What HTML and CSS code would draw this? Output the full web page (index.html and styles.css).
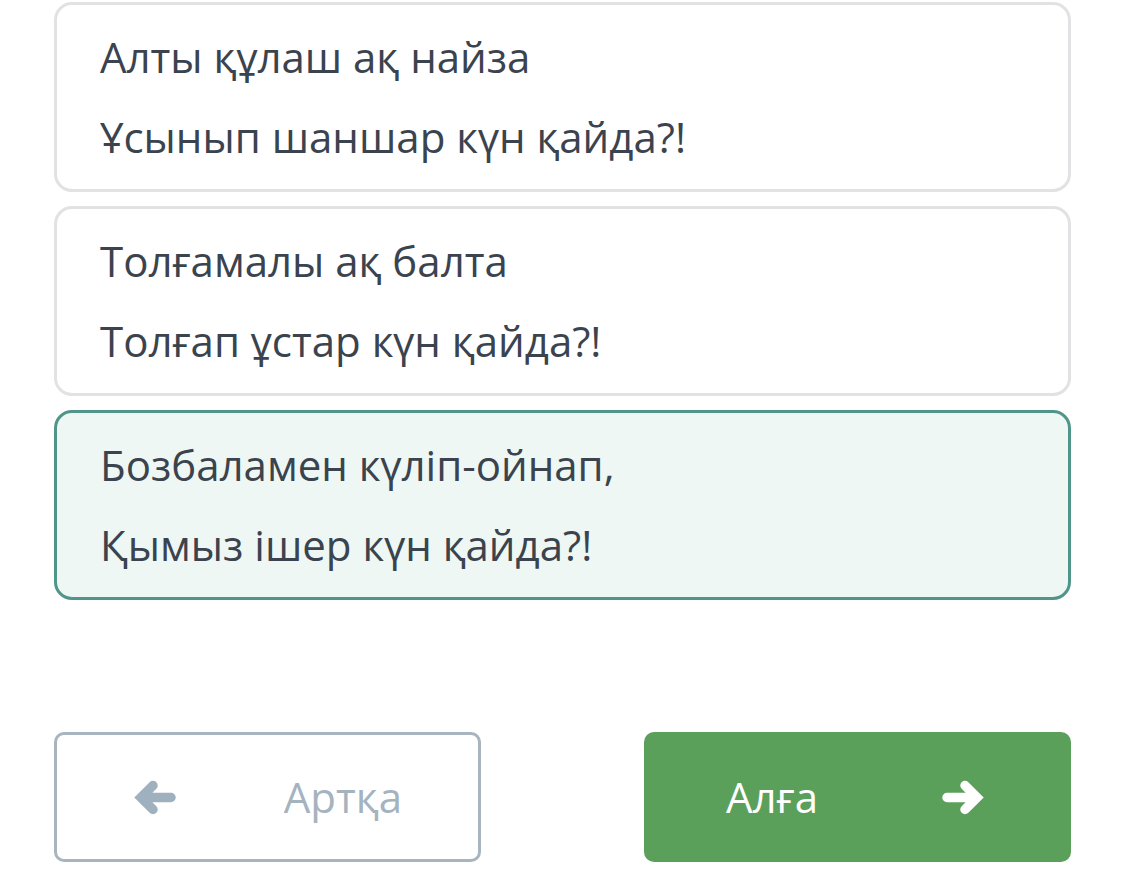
FILE: index.html
```html
<!DOCTYPE html>
<html lang="kk">
<head>
<meta charset="utf-8">
<title>Quiz</title>
<link rel="stylesheet" href="styles.css">
</head>
<body>
<main class="page">
  <section class="options">
    <div class="option">
      <p class="line">Алты құлаш ақ найза</p>
      <p class="line">Ұсынып шаншар күн қайда?!</p>
    </div>
    <div class="option">
      <p class="line">Толғамалы ақ балта</p>
      <p class="line">Толғап ұстар күн қайда?!</p>
    </div>
    <div class="option option-selected">
      <p class="line">Бозбаламен күліп-ойнап,</p>
      <p class="line">Қымыз ішер күн қайда?!</p>
    </div>
  </section>
  <nav class="nav">
    <button class="btn btn-back" type="button">
      <svg class="icon" viewBox="0 0 43 35" aria-hidden="true"><path d="M38 17.5H9M20 5.5L8 17.5L20 29.5"/></svg>
      <span class="btn-label">Артқа</span>
    </button>
    <button class="btn btn-next" type="button">
      <span class="btn-label">Алға</span>
      <svg class="icon" viewBox="0 0 43 35" aria-hidden="true"><path d="M5 17.5H34M23 5.5L35 17.5L23 29.5"/></svg>
    </button>
  </nav>
</main>
</body>
</html>
```

FILE: styles.css
```css
* { box-sizing: border-box; }

html, body {
  margin: 0;
  padding: 0;
  background: #ffffff;
}

body {
  font-family: "Open Sans", "Noto Sans", "DejaVu Sans", sans-serif;
  color: #3a434e;
}

.page {
  padding: 2px 54px 0 54px;
}

.options {
  display: flex;
  flex-direction: column;
  gap: 14px;
}

.option {
  border: 3px solid #e2e2e5;
  border-radius: 18px;
  background: #ffffff;
  padding: 12px 40px 12px 43px;
}

.option-selected {
  border-color: #4f958a;
  background: #eef7f3;
}

.line {
  margin: 0;
  font-size: 42px;
  line-height: 80px;
  white-space: nowrap;
}

.nav {
  display: flex;
  justify-content: space-between;
  margin-top: 132px;
}

.btn {
  width: 427px;
  height: 130px;
  border-radius: 10px;
  display: flex;
  align-items: center;
  justify-content: space-between;
  font-family: inherit;
  font-size: 42px;
  cursor: pointer;
}

.btn-back {
  background: #ffffff;
  border: 3px solid #a8b5bf;
  color: #a5b3bf;
  padding: 0 76px 0 76px;
}

.btn-back .icon { stroke: #9fb0bf; }

.btn-next {
  background: #5aa05b;
  border: none;
  color: #ffffff;
  padding: 0 86px 0 82px;
}

.btn-next .icon { stroke: #ffffff; }

.icon {
  width: 43px;
  height: 35px;
  display: block;
  fill: none;
  stroke-width: 9.5;
  stroke-linecap: round;
  stroke-linejoin: miter;
}

.btn-label {
  line-height: 1;
}
```
